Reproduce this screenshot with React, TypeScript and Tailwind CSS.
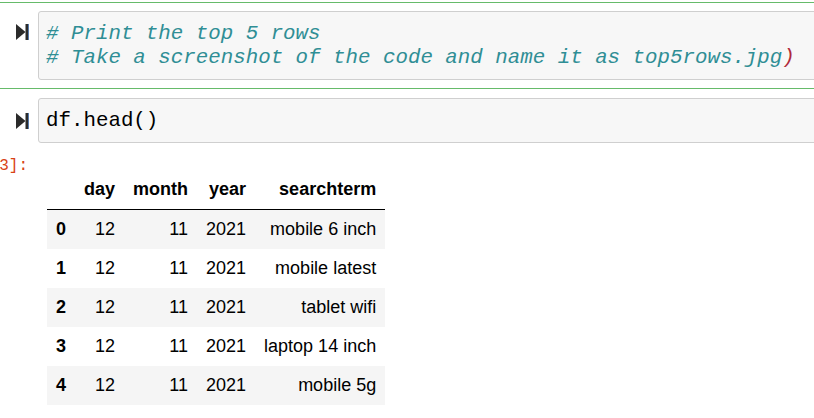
import React from "react";

function RunIcon() {
  return (
    <svg width="13" height="16" viewBox="0 0 13 16" className="block">
      <polygon points="0,0 9.5,8 0,16" fill="#2b2b2b" />
      <rect x="9.5" y="0" width="3" height="16" fill="#2b2b2b" />
      <rect x="12.3" y="0" width="0.7" height="16" fill="#3b6fb5" />
    </svg>
  );
}

const rows = [
  ["0", "12", "11", "2021", "mobile 6 inch"],
  ["1", "12", "11", "2021", "mobile latest"],
  ["2", "12", "11", "2021", "tablet wifi"],
  ["3", "12", "11", "2021", "laptop 14 inch"],
  ["4", "12", "11", "2021", "mobile 5g"],
];

export default function App() {
  const mono = { fontFamily: '"Liberation Mono", "Courier New", monospace' };
  return (
    <div className="w-[814px] h-[418px] overflow-hidden bg-white">
      {/* Cell 1 (selected, edit mode) */}
      <div className="mt-[2px] border-y border-[#66bb6a] py-[8px] flex">
        <div className="w-[38px] shrink-0 pl-[16px] pt-[13px]">
          <RunIcon />
        </div>
        <div
          className="flex-1 -mr-[20px] border border-[#cfcfcf] rounded-[3px] bg-[#f7f7f7] pt-[10px] pb-[9px] pl-[7px] text-[20.8px] leading-[24px] whitespace-pre italic text-[#2f8e95]"
          style={mono}
        >
          <div># Print the top 5 rows</div>
          <div>
            # Take a screenshot of the code and name it as top5rows.jpg
            <span className="text-[#b02a3a]">)</span>
          </div>
        </div>
      </div>

      {/* Cell 2 */}
      <div className="pt-[8px] flex border-t border-transparent">
        <div className="w-[38px] shrink-0 pl-[16px] pt-[15px]">
          <RunIcon />
        </div>
        <div
          className="flex-1 -mr-[20px] border border-[#cfcfcf] rounded-[3px] bg-[#f7f7f7] pt-[10px] pb-[9px] pl-[7px] text-[20.8px] leading-[24px] whitespace-pre text-black"
          style={mono}
        >
          df.head()
        </div>
      </div>

      {/* Output */}
      <div className="flex">
        <div className="w-[38px] shrink-0 pt-[14px]">
          <div
            className="w-[28px] flex justify-end whitespace-nowrap text-[16px] leading-[19px] text-[#d84315]"
            style={mono}
          >
            Out[3]:
          </div>
        </div>
        <div className="pt-[27px] pl-[9px]">
          <table
            className="border-collapse text-[18px] leading-[21px] text-black"
            style={{ fontFamily: '"Liberation Sans", Arial, sans-serif' }}
          >
            <thead>
              <tr className="border-b border-black">
                <th className="px-[9px] py-[9px] text-right font-bold"></th>
                <th className="px-[9px] py-[9px] text-right font-bold">day</th>
                <th className="px-[9px] py-[9px] text-right font-bold">month</th>
                <th className="px-[9px] py-[9px] text-right font-bold">year</th>
                <th className="px-[9px] py-[9px] text-right font-bold">searchterm</th>
              </tr>
            </thead>
            <tbody>
              {rows.map((r, i) => (
                <tr key={i} className={i % 2 === 0 ? "bg-[#f5f5f5]" : "bg-white"}>
                  <th className="px-[9px] py-[9px] text-right font-bold whitespace-nowrap">{r[0]}</th>
                  <td className="px-[9px] py-[9px] text-right whitespace-nowrap">{r[1]}</td>
                  <td className="px-[9px] py-[9px] text-right whitespace-nowrap">{r[2]}</td>
                  <td className="px-[9px] py-[9px] text-right whitespace-nowrap">{r[3]}</td>
                  <td className="px-[9px] py-[9px] text-right whitespace-nowrap">{r[4]}</td>
                </tr>
              ))}
            </tbody>
          </table>
        </div>
      </div>
    </div>
  );
}
